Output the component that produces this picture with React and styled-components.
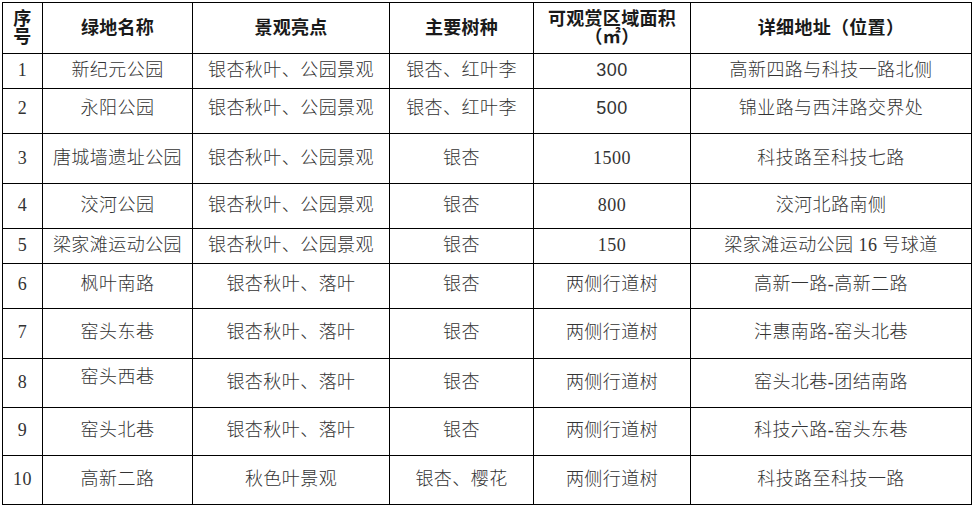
import React from 'react';
import styled, { createGlobalStyle } from 'styled-components';

const Global = createGlobalStyle`
  html, body { margin: 0; padding: 0; background: #fff; }
  body { font-family: "Liberation Serif", "Noto Sans CJK SC", serif; }
`;

const Page = styled.div`
  padding: 2px 0 0 2px;
`;

const Table = styled.table`
  border-collapse: collapse;
  table-layout: fixed;
  width: 969px;
  font-family: "Liberation Serif", "Noto Sans CJK SC", serif;
`;

const Row = styled.tr`
  height: ${(p) => p.$h}px;
`;

const Head = styled.th`
  border: 1px solid #000;
  padding: 0 5px;
  text-align: center;
  vertical-align: middle;
  font-size: 18px;
  line-height: 18px;
  font-weight: 700;
  color: #1a1a1a;
  letter-spacing: 0.3px;
`;

const Cell = styled.td`
  border: 1px solid #000;
  padding: 0 2px ${(p) => p.$lift || 2}px;
  text-align: center;
  vertical-align: middle;
  font-size: 18px;
  line-height: 20px;
  font-weight: 300;
  color: #333;
  white-space: nowrap;
  letter-spacing: 0.45px;
  font-family: ${(p) =>
    p.$sans
      ? '"Liberation Sans", "Noto Sans CJK SC", sans-serif'
      : '"Liberation Serif", "Noto Sans CJK SC", serif'};
`;

const widths = [40, 150, 197, 144, 157, 281];
const heads = ['序号', '绿地名称', '景观亮点', '主要树种', '可观赏区域面积（㎡）', '详细地址（位置）'];

const rows = [
  { h: 35, c: ['1', '新纪元公园', '银杏秋叶、公园景观', '银杏、红叶李', '300', '高新四路与科技一路北侧'], sans: true },
  { h: 45, c: ['2', '永阳公园', '银杏秋叶、公园景观', '银杏、红叶李', '500', '锦业路与西沣路交界处'], sans: true, lift: 6 },
  { h: 50, c: ['3', '唐城墙遗址公园', '银杏秋叶、公园景观', '银杏', '1500', '科技路至科技七路'] },
  { h: 45, c: ['4', '洨河公园', '银杏秋叶、公园景观', '银杏', '800', '洨河北路南侧'] },
  { h: 35, c: ['5', '梁家滩运动公园', '银杏秋叶、公园景观', '银杏', '150', '梁家滩运动公园 16 号球道'] },
  { h: 45, c: ['6', '枫叶南路', '银杏秋叶、落叶', '银杏', '两侧行道树', '高新一路-高新二路'], lift: 4 },
  { h: 50, c: ['7', '窑头东巷', '银杏秋叶、落叶', '银杏', '两侧行道树', '沣惠南路-窑头北巷'], lift: 4 },
  { h: 49, c: ['8', '窑头西巷', '银杏秋叶、落叶', '银杏', '两侧行道树', '窑头北巷-团结南路'], lift: 2, liftName: 12 },
  { h: 48, c: ['9', '窑头北巷', '银杏秋叶、落叶', '银杏', '两侧行道树', '科技六路-窑头东巷'], lift: 3 },
  { h: 49, c: ['10', '高新二路', '秋色叶景观', '银杏、樱花', '两侧行道树', '科技路至科技一路'], lift: 3 },
];

export default function App() {
  return (
    <Page>
      <Global />
      <Table>
        <colgroup>
          {widths.map((w, i) => (
            <col key={i} style={{ width: w }} />
          ))}
        </colgroup>
        <thead>
          <Row $h={51}>
            {heads.map((t) => (
              <Head key={t}>{t}</Head>
            ))}
          </Row>
        </thead>
        <tbody>
          {rows.map((r) => (
            <Row key={r.c[0]} $h={r.h}>
              {r.c.map((t, i) => (
                <Cell
                  key={i}
                  $sans={r.sans && i === 4}
                  $lift={i === 1 && r.liftName ? r.liftName : r.lift}
                >
                  {t}
                </Cell>
              ))}
            </Row>
          ))}
        </tbody>
      </Table>
    </Page>
  );
}
